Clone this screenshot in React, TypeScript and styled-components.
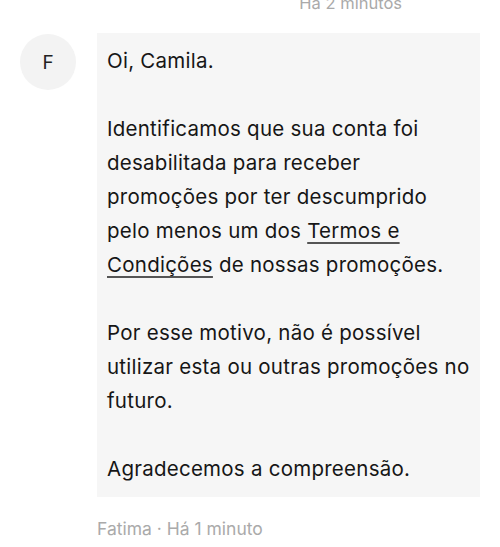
import React from 'react';
import styled, { createGlobalStyle } from 'styled-components';

const GlobalStyle = createGlobalStyle`
  body {
    margin: 0;
    background: #fff;
    font-family: Inter, 'Noto Sans', sans-serif;
    color: #161616;
    overflow: hidden;
  }
`;

const Thread = styled.div`
  width: 500px;
  height: 547px;
  overflow: hidden;
  display: flex;
  flex-direction: column;
`;

const Meta = styled.div<{ $align?: 'left' | 'right' }>`
  font-size: 16.5px;
  line-height: 20px;
  color: #aaaaaa;
  text-align: ${(p) => (p.$align === 'right' ? 'right' : 'left')};
`;

const PrevMeta = styled(Meta)`
  margin-top: -7px;
  padding-right: 98px;
`;

const MessageRow = styled.div`
  display: flex;
  align-items: flex-start;
  gap: 21px;
  padding: 20px 20px 0 20px;
`;

const Avatar = styled.div`
  flex: none;
  width: 56px;
  height: 56px;
  margin-top: 1px;
  border-radius: 50%;
  background: #f3f3f3;
  display: flex;
  align-items: center;
  justify-content: center;
  font-size: 19px;
  color: #222;
`;

const Column = styled.div`
  flex: 1;
  min-width: 0;
  display: flex;
  flex-direction: column;
`;

const Bubble = styled.div`
  background: #f6f6f6;
  padding: 11px 10px;
  font-size: 20.5px;
  letter-spacing: 0.25px;
  line-height: 34px;
  white-space: nowrap;
`;

const Paragraph = styled.p`
  margin: 0;
  & + & {
    margin-top: 34px;
  }
`;

const TermsLink = styled.a`
  color: inherit;
  text-decoration: underline;
  text-decoration-thickness: 1.5px;
  text-underline-offset: 4px;
  text-decoration-color: #555;
`;

const Footer = styled(Meta)`
  margin-top: 22px;
  font-size: 17.5px;
`;

export default function App() {
  return (
    <Thread>
      <GlobalStyle />
      <PrevMeta $align="right">Há 2 minutos</PrevMeta>
      <MessageRow>
        <Avatar>F</Avatar>
        <Column>
          <Bubble>
            <Paragraph>Oi, Camila.</Paragraph>
            <Paragraph>
              Identificamos que sua conta foi
              <br />
              desabilitada para receber
              <br />
              promoções por ter descumprido
              <br />
              pelo menos um dos <TermsLink href="#">Termos e</TermsLink>
              <br />
              <TermsLink href="#">Condições</TermsLink> de nossas promoções.
            </Paragraph>
            <Paragraph>
              Por esse motivo, não é possível
              <br />
              utilizar esta ou outras promoções no
              <br />
              futuro.
            </Paragraph>
            <Paragraph>Agradecemos a compreensão.</Paragraph>
          </Bubble>
          <Footer>Fatima · Há 1 minuto</Footer>
        </Column>
      </MessageRow>
    </Thread>
  );
}
